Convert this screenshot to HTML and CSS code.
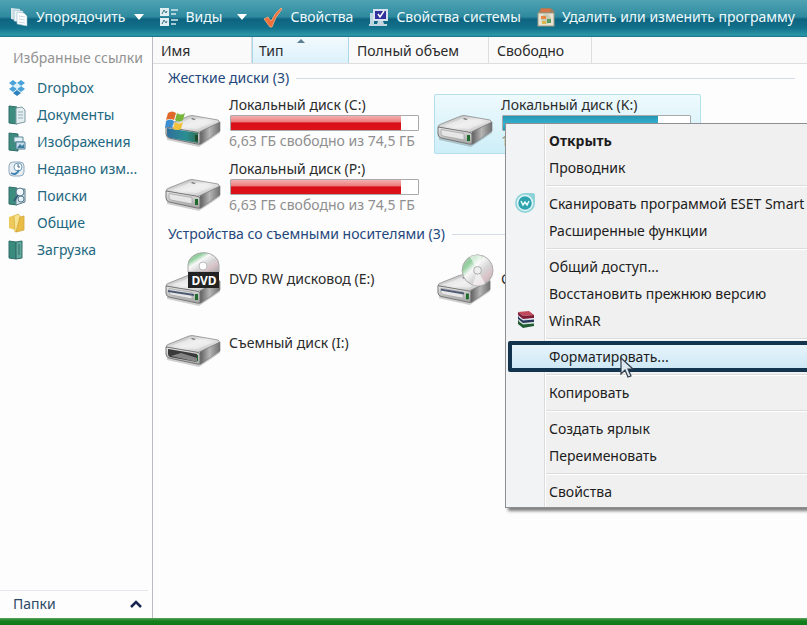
FILE: index.html
```html
<!DOCTYPE html>
<html lang="ru">
<head>
    <meta charset="UTF-8" />
    <meta name="viewport" content="width=device-width, initial-scale=1.0" />
    <title>Компьютер</title>
    <link rel="stylesheet" href="styles.css">
</head>
<body>
    <!-- Shared drive shapes -->
    <svg class="defs" aria-hidden="true">
        <defs>
            <linearGradient id="driveTop" x1="0" y1="0" x2="1" y2="1">
                <stop offset="0" stop-color="#a9a9a9" />
                <stop offset="0.5" stop-color="#ececec" />
                <stop offset="1" stop-color="#b4b4b4" />
            </linearGradient>
            <linearGradient id="driveSide" x1="0" y1="0" x2="1" y2="0">
                <stop offset="0" stop-color="#565656" />
                <stop offset="0.5" stop-color="#b5b5b5" />
                <stop offset="1" stop-color="#707070" />
            </linearGradient>
            <linearGradient id="driveFront" x1="0" y1="0" x2="0" y2="1">
                <stop offset="0" stop-color="#e9e9e9" />
                <stop offset="1" stop-color="#a2a2a2" />
            </linearGradient>
            <linearGradient id="systemFront" x1="0" y1="0" x2="1" y2="0">
                <stop offset="0" stop-color="#2f6f9c" />
                <stop offset="0.6" stop-color="#2a8f93" />
                <stop offset="1" stop-color="#2f6f55" />
            </linearGradient>
            <linearGradient id="disc" x1="0" y1="0" x2="1" y2="1">
                <stop offset="0" stop-color="#c9c9c9" />
                <stop offset="0.25" stop-color="#8fcf9c" />
                <stop offset="0.4" stop-color="#f8f8f8" />
                <stop offset="0.6" stop-color="#d5d5d5" />
                <stop offset="0.75" stop-color="#d9c3c8" />
                <stop offset="1" stop-color="#a5a5a5" />
            </linearGradient>
            <symbol id="drive" viewBox="0 0 56 32">
                <path d="M2 22 L34 28 L55 15 L55 18 L34 32 L2 25z" fill="#000" opacity="0.18" />
                <path d="M1 12 Q1 10 4 9 L24 1 Q27 0 30 1 L53 5 Q55 6 54 8 L34 17 L31 18z" fill="url(#driveTop)" stroke="#8b8b8b" stroke-width="0.8" />
                <path d="M6 11 L27 3 L49 7 L32 14z" fill="#f4f4f4" opacity="0.6" />
                <path d="M35 17 L55 7 L55 16 L36 29 Q34 30 34 28z" fill="url(#driveSide)" stroke="#777" stroke-width="0.6" />
                <path d="M1 12 L31 17 Q35 17 35 20 L35 28 Q35 30 32 29 L4 23 Q1 22 1 19z" fill="url(#driveFront)" stroke="#777" stroke-width="1" />
                <path d="M4 14.500 L27 18.500 L27 25 L6 21 Q4 20 4 18z" fill="#e6e6e6" stroke="#a5a5a5" stroke-width="0.8" />
                <rect x="30" y="20" width="3" height="6" fill="#1f6b2c" />
                <path d="M27 3 L31 4 L29 5 L26 4z" fill="#777" />
            </symbol>
        </defs>
    </svg>

    <div class="window">
        <nav class="toolbar" aria-label="Команды">
            <button type="button" class="tool">
                <svg width="19" height="20" viewBox="0 0 19 20">
                    <path d="M1 1l9 1v12l-9-2z" fill="#d8e6ea" />
                    <path d="M4 3l9 1v12l-9-2z" fill="#eef6f8" stroke="#8fb6c2" stroke-width="0.6" />
                    <path d="M7 5l7 1 3 3v10l-10-2z" fill="#fff" stroke="#8fb6c2" stroke-width="0.6" />
                    <path d="M9 9l6 1M9 12l6 1M9 15l6 1" stroke="#c3d7dd" />
                </svg>
                <span>Упорядочить</span>
                <svg class="arrow" width="10" height="6" viewBox="0 0 10 6"><path d="M0 0h10l-5 6z" fill="#fff" /></svg>
            </button>
            <button type="button" class="tool">
                <svg width="19" height="19" viewBox="0 0 19 19">
                    <g fill="#e2eff2"><rect width="9" height="8" /><rect y="10" width="9" height="8" /></g>
                    <path d="M2 6l2-4 2 3 1-2M2 16l2-4 2 3 1-2" stroke="#34768b" fill="none" />
                    <path d="M11 2h7M11 6h5M11 12h7M11 16h5" stroke="#d5e8ed" stroke-width="1.500" />
                </svg>
                <span>Виды</span>
                <svg class="arrow arrow-far" width="10" height="6" viewBox="0 0 10 6"><path d="M0 0h10l-5 6z" fill="#fff" /></svg>
            </button>
            <button type="button" class="tool">
                <svg width="20" height="21" viewBox="0 0 20 21">
                    <path d="M1 12l4-2 3 4Q12 6 18 1l1 1Q12 10 9 20H7z" fill="#f0703c" stroke="#f9ae82" stroke-width="0.8" />
                </svg>
                <span>Свойства</span>
            </button>
            <button type="button" class="tool">
                <svg width="20" height="19" viewBox="0 0 20 19">
                    <path d="M1 5h4v11h3v2H0v-2h1z" fill="#bdd6e2" />
                    <rect x="4" y="1" width="15" height="12" fill="#d7e2f0" />
                    <rect x="6" y="3" width="11" height="8" fill="#33309c" />
                    <path d="M9 6l2 3 4-6" stroke="#fff" stroke-width="1.500" fill="none" />
                    <path d="M9 13h5l1 3h3v2H6v-2h2z" fill="#c4d5e2" />
                </svg>
                <span>Свойства системы</span>
            </button>
            <button type="button" class="tool">
                <svg width="18" height="20" viewBox="0 0 18 20">
                    <path d="M2 4l2-3h10l3 3v3H2z" fill="#9c8060" />
                    <path d="M4 2h9v3H4z" fill="#d87348" />
                    <rect x="1" y="6" width="16" height="13" fill="#e9e4d2" stroke="#9e9a86" />
                    <circle cx="9" cy="12" r="5" fill="#c9cbb5" />
                    <path d="M4 9h5v3H4z" fill="#e68844" /><path d="M10 12h4v4h-4z" fill="#5a9c5f" /><path d="M5 14h4v3H5z" fill="#ddb650" />
                </svg>
                <span>Удалить или изменить программу</span>
            </button>
        </nav>

        <div class="main">
            <aside class="sidebar">
                <h2>Избранные ссылки</h2>
                <ul class="links">
                    <li><a href="#">
                        <svg width="18" height="18" viewBox="0 0 18 18">
                            <path d="M5 1l4 3-4 3-4-3zM13 1l4 3-4 3-4-3zM5 7l4 3-4 3-4-3zM13 7l4 3-4 3-4-3z" fill="#4aa3d8" />
                            <path d="M9 11l4 3-4 3-4-3z" fill="#2d82bd" />
                            <path d="M9 4l4 3-4 3-4-3z" fill="#dcf0fa" />
                        </svg><span>Dropbox</span></a></li>
                    <li><a href="#">
                        <svg width="18" height="20" viewBox="0 0 18 20">
                            <path d="M1 1l8 1v17l-8-1z" fill="#3c8c80" stroke="#2e6d68" />
                            <path d="M8 3l6-1 3 3v12l-9 2z" fill="#e4eef0" stroke="#7d9ba3" />
                            <path d="M10 7h5M10 10h5M10 13h5" stroke="#8fb0bb" />
                        </svg><span>Документы</span></a></li>
                    <li><a href="#">
                        <svg width="18" height="20" viewBox="0 0 18 20">
                            <path d="M1 1l9 1v17l-9-1z" fill="#3c8c80" stroke="#2e6d68" />
                            <path d="M6 5h9v5H6z" fill="#e2f0f5" stroke="#5f8b9b" />
                            <path d="M8 10h9v7H8z" fill="#c5dceb" stroke="#4d7c93" />
                            <path d="M9 16l3-4 2 2 2-2v4z" fill="#3d7d9d" />
                        </svg><span>Изображения</span></a></li>
                    <li><a href="#">
                        <svg width="18" height="18" viewBox="0 0 18 18">
                            <rect x="1" y="2" width="15" height="14" rx="4" fill="#e6eef4" stroke="#8fa9bb" />
                            <circle cx="10" cy="7" r="4" fill="#fff" stroke="#6f9cba" />
                            <path d="M10 4v3h2" stroke="#31658b" fill="none" />
                            <path d="M3 13q5 3 8-3" stroke="#3d82b3" stroke-width="2" fill="none" />
                        </svg><span>Недавно изм...</span></a></li>
                    <li><a href="#">
                        <svg width="18" height="20" viewBox="0 0 18 20">
                            <path d="M1 1l8 1v17l-8-1z" fill="#3c8c80" stroke="#2e6d68" />
                            <path d="M8 3h9v13l-9 3z" fill="#d4e3e8" stroke="#607f8b" />
                            <circle cx="12" cy="6" r="4" fill="#f1f8fb" stroke="#50798e" />
                            <path d="M10 9l-4 6" stroke="#305d74" stroke-width="2" />
                            <circle cx="13" cy="13" r="3" fill="#e6f1f5" stroke="#50798e" />
                        </svg><span>Поиски</span></a></li>
                    <li><a href="#">
                        <svg width="18" height="20" viewBox="0 0 18 20">
                            <path d="M1 4l6-2v15l-6-2z" fill="#ecc95a" />
                            <path d="M6 3l4-2 2 2v14l-5 2z" fill="#f7e290" stroke="#d9b54a" stroke-width="0.8" />
                            <path d="M12 4l4-1v14l-8 2z" fill="#e9bd45" stroke="#cfa73a" stroke-width="0.8" />
                        </svg><span>Общие</span></a></li>
                    <li><a href="#">
                        <svg width="18" height="20" viewBox="0 0 18 20">
                            <path d="M1 1l7 1v17l-7-1z" fill="#3a8a7e" stroke="#2e6d68" />
                            <path d="M8 2l6-1v17l-6 1z" fill="#62a79b" stroke="#2e6d68" />
                            <path d="M11 4v11" stroke="#2e6d68" />
                        </svg><span>Загрузка</span></a></li>
                </ul>
                <button type="button" class="folders">
                    <span>Папки</span>
                    <svg width="12" height="8" viewBox="0 0 12 8"><path d="M1 7l5-5 5 5" fill="none" stroke="#16264f" stroke-width="2.500" /></svg>
                </button>
            </aside>

            <section class="content">
                <div class="columns">
                    <button type="button" class="col col-name">Имя</button>
                    <button type="button" class="col col-type">Тип
                        <svg class="sort" width="8" height="4" viewBox="0 0 8 4"><path d="M0 4l4-4 4 4z" fill="#5a7f92" /></svg>
                    </button>
                    <button type="button" class="col col-size">Полный объем</button>
                    <button type="button" class="col col-free">Свободно</button>
                </div>

                <h3 class="group">Жесткие диски (3)</h3>
                <div class="tiles">
                    <div class="tile">
                        <svg class="icon" width="56" height="52" viewBox="0 0 56 52">
                            <use href="#drive" x="0" y="18" width="56" height="32" />
                            <path d="M2 31l31 5v10L5 41q-3-1-3-3z" fill="url(#systemFront)" />
                            <rect x="30" y="38" width="3" height="6" fill="#1f4b2c" />
                            <path d="M3 16q4-3 8 0l-2 7q-4-2-8 0z" fill="#e06a2c" />
                            <path d="M12 16q4 3 8 0l-2 7q-4 3-8 0z" fill="#79b63c" />
                            <path d="M1 24q4-3 8 0l-2 7q-3-2-7 0z" fill="#3e8fd0" />
                            <path d="M10 25q4 3 8 0l-2 7q-4 2-8 0z" fill="#f2c13a" />
                        </svg>
                        <div class="info">
                            <span>Локальный диск (C:)</span>
                            <div class="bar bar-red"><i style="width: 91%"></i></div>
                            <span class="free">6,63 ГБ свободно из 74,5 ГБ</span>
                        </div>
                    </div>
                    <div class="tile tile-selected">
                        <svg class="icon" width="56" height="52" viewBox="0 0 56 52"><use href="#drive" x="0" y="18" width="56" height="32" /></svg>
                        <div class="info">
                            <span>Локальный диск (K:)</span>
                            <div class="bar bar-blue"><i style="width: 83%"></i></div>
                            <span class="free">12,6 ГБ</span>
                        </div>
                    </div>
                    <div class="tile">
                        <svg class="icon" width="56" height="52" viewBox="0 0 56 52"><use href="#drive" x="0" y="18" width="56" height="32" /></svg>
                        <div class="info">
                            <span>Локальный диск (P:)</span>
                            <div class="bar bar-red"><i style="width: 91%"></i></div>
                            <span class="free">6,63 ГБ свободно из 74,5 ГБ</span>
                        </div>
                    </div>
                </div>

                <h3 class="group">Устройства со съемными носителями (3)</h3>
                <div class="tiles">
                    <div class="tile">
                        <svg class="icon" width="56" height="52" viewBox="0 0 56 52">
                            <use href="#drive" x="0" y="21" width="56" height="32" />
                            <path d="M3 38l26 4" stroke="#4d5873" stroke-width="2" />
                            <path d="M23 19V12a15 12 0 0 1 31 0v7z" fill="url(#disc)" stroke="#a8a8a8" />
                            <circle cx="38" cy="13" r="4" fill="#fff" stroke="#bbb" />
                            <rect x="23" y="19" width="31" height="16" fill="#222" />
                            <text class="dvd" x="39" y="32" text-anchor="middle">DVD</text>
                        </svg>
                        <div class="info"><span>DVD RW дисковод (E:)</span></div>
                    </div>
                    <div class="tile">
                        <svg class="icon" width="58" height="52" viewBox="0 0 58 52">
                            <use href="#drive" x="0" y="21" width="56" height="32" />
                            <path d="M4 37l24 4" stroke="#4d5873" stroke-width="2" />
                            <circle cx="42" cy="17" r="16" fill="url(#disc)" stroke="#a8a8a8" />
                            <path d="M42 17L34 3a16 16 0 0 1 12-1zM42 17l8 14a16 16 0 0 1-13 1z" fill="#fff" opacity="0.6" />
                            <circle cx="42" cy="17" r="4" fill="#eee" stroke="#aaa" />
                        </svg>
                        <div class="info"><span>CD (F:)</span></div>
                    </div>
                    <div class="tile">
                        <svg class="icon" width="56" height="52" viewBox="0 0 56 52">
                            <use href="#drive" x="0" y="18" width="56" height="32" />
                            <path d="M3 32l29 5v8L5 40q-2-1-2-3z" fill="#3a3a3a" />
                            <path d="M6 39l10-3 16 5v4z" fill="#858585" />
                        </svg>
                        <div class="info"><span>Съемный диск (I:)</span></div>
                    </div>
                </div>
            </section>
        </div>

        <div class="taskbar"></div>

        <div class="menu" role="menu">
            <button type="button" role="menuitem" class="item item-default">Открыть</button>
            <button type="button" role="menuitem" class="item">Проводник</button>
            <hr>
            <button type="button" role="menuitem" class="item">
                <svg class="item-icon" width="20" height="20" viewBox="0 0 20 20">
                    <path d="M10 0h8q2 0 2 2v8a10 10 0 1 1-10-10z" fill="#8fd3d8" />
                    <circle cx="10" cy="10" r="7.500" fill="#2ea3ae" stroke="#e2f6f7" stroke-width="1.500" />
                    <path d="M6 8l2 4 2-3 2 3 2-4" fill="none" stroke="#e9fbfc" stroke-width="1.500" />
                </svg>Сканировать программой ESET Smart S</button>
            <button type="button" role="menuitem" class="item">Расширенные функции</button>
            <hr>
            <button type="button" role="menuitem" class="item">Общий доступ...</button>
            <button type="button" role="menuitem" class="item">Восстановить прежнюю версию</button>
            <button type="button" role="menuitem" class="item">
                <svg class="item-icon" width="20" height="18" viewBox="0 0 20 18">
                    <g transform="translate(2 0)">
                        <path d="M1 2l11-1 5 4-11 1z" fill="#c14a5c" />
                        <path d="M1 2l5 4 11-1v3L6 9 1 5z" fill="#7c1d35" />
                        <path d="M1 6l5 4 11-1v3L6 13 1 9z" fill="#28365c" />
                        <path d="M2 7l4 3 11-1" stroke="#dbe1ec" fill="none" />
                        <path d="M1 10l5 4 11-1v3L6 18l-5-4z" fill="#1f5c33" />
                        <path d="M2 11l4 3 11-1" stroke="#cfe3d2" fill="none" />
                    </g>
                </svg>WinRAR</button>
            <hr>
            <button type="button" role="menuitem" class="item item-active">Форматировать...
                <svg class="cursor" width="14" height="22" viewBox="0 0 14 22"><path d="M1 1v16l4-4 3 7 3-1-3-7h5z" fill="#dce8f0" stroke="#333d4c" stroke-width="1.200" /></svg>
            </button>
            <hr>
            <button type="button" role="menuitem" class="item">Копировать</button>
            <hr>
            <button type="button" role="menuitem" class="item">Создать ярлык</button>
            <button type="button" role="menuitem" class="item">Переименовать</button>
            <hr>
            <button type="button" role="menuitem" class="item">Свойства</button>
        </div>
    </div>
</body>
</html>
```
FILE: styles.css
```css
* {
    margin: 0;
    padding: 0;
    box-sizing: border-box;
}

body {
    font-family: "Noto Sans", "Open Sans", sans-serif;
    font-size: 14px;
    line-height: 20px;
    color: #2b2b2b;
    background: #fdfdfd;
}

button {
    font: inherit;
    color: inherit;
    background: none;
    border: none;
    text-align: left;
    white-space: nowrap;
}

.defs {
    position: absolute;
    width: 0;
    height: 0;
}

.window {
    position: relative;
    display: flex;
    flex-direction: column;
    min-height: 100vh;
    overflow: hidden;
}

/* Toolbar */
.toolbar {
    display: flex;
    gap: 16px;
    height: 37px;
    padding: 0 10px 3px;
    background: linear-gradient(#4fa3b3 0, #2f8a9f 45%, #0d6480 52%, #12718b 75%, #2b97a8 95%, #1b6f85 100%);
}

.tool {
    display: flex;
    align-items: center;
    gap: 7px;
    flex: none;
    color: #eefafc;
}

.arrow {
    margin-left: 1px;
}

.arrow-far {
    margin-left: 8px;
}

.main {
    display: flex;
    flex: 1;
}

/* Favourite links */
.sidebar {
    display: flex;
    flex-direction: column;
    width: 153px;
    flex: none;
    border-right: 1px solid #b9bcc2;
}

.sidebar h2 {
    padding: 11px 0 6px 13px;
    font-size: 14px;
    font-weight: 400;
    color: #929292;
    white-space: nowrap;
}

.links {
    flex: 1;
    list-style: none;
}

.links a {
    display: flex;
    align-items: center;
    gap: 11px;
    height: 27px;
    padding-left: 8px;
    color: #22677f;
    text-decoration: none;
    white-space: nowrap;
}

.links a:hover {
    text-decoration: underline;
}

.folders {
    display: flex;
    justify-content: space-between;
    align-items: center;
    height: 28px;
    margin-right: 4px;
    padding: 0 6px 2px 13px;
    border-top: 1px solid #e4e8ec;
    color: #2c4a66;
}

/* Column headers */
.content {
    flex: 1;
    min-width: 0;
}

.columns {
    display: flex;
    height: 27px;
    background: #fafafa;
    border-bottom: 1px solid #dedede;
}

.col {
    position: relative;
    padding: 2px 8px 0;
    border-right: 1px solid #dcdfe2;
}

.col-name {
    width: 99px;
}

.col-type {
    width: 97px;
    background: linear-gradient(#f2fafe, #dcf1fb);
    border-left: 1px solid #a9d6ea;
    border-right-color: #a9d6ea;
    padding-left: 6px;
}

.col-size {
    width: 140px;
}

.col-free {
    width: 103px;
}

.sort {
    position: absolute;
    top: 2px;
    left: 44px;
}

/* Drive groups */
.group {
    display: flex;
    align-items: center;
    gap: 7px;
    height: 30px;
    padding: 0 12px 2px 15px;
    font-size: 14px;
    font-weight: 400;
    color: #24487c;
    white-space: nowrap;
}

.group::after {
    content: "";
    flex: 1;
    height: 1px;
    background: #d3dde8;
}

.tiles {
    display: grid;
    grid-template-columns: repeat(auto-fill, 267px);
    gap: 4px 5px;
    padding-left: 9px;
    margin-bottom: 2px;
}

.tile {
    display: flex;
    align-items: center;
    gap: 8px;
    height: 60px;
    padding: 0 9px 2px 2px;
    border: 1px solid transparent;
    white-space: nowrap;
}

.tile-selected {
    background: linear-gradient(#eefafd, #cdeef8);
    border-color: #b3dfee;
    border-radius: 2px;
}

.icon {
    flex: none;
    width: 56px;
    overflow: visible;
}

.info {
    flex: 1;
    display: flex;
    flex-direction: column;
}

.bar {
    height: 16px;
    margin-left: 1px;
    border: 1px solid #a9a9a9;
    border-radius: 1px;
    background: #fff;
}

.bar i {
    display: block;
    height: 100%;
}

.bar-red i {
    background: linear-gradient(#f5b0b0 0, #ec7f80 40%, #d90f17 50%, #dc1219 100%);
}

.bar-blue i {
    background: linear-gradient(#2596b6, #35b4d0 60%, #1b9dbe);
}

.free {
    color: #8f8f8f;
}

.dvd {
    font-size: 12px;
    font-weight: 700;
    fill: #fff;
}

.taskbar {
    height: 7px;
    background: linear-gradient(#5aa35e 0, #16801f 40%, #0f7a18 100%);
}

/* Context menu */
.menu {
    position: absolute;
    top: 123px;
    left: 505px;
    right: -20px;
    padding: 3px 2px 2px;
    background: linear-gradient(90deg, #f2f3f4 38px, #dcdcdc 38px, #dcdcdc 39px, #fff 39px, #fff 40px, #f0f0f0 40px);
    border: 1px solid #8d8f92;
    box-shadow: 3px 3px 3px rgba(0, 0, 0, 0.5);
    color: #1d1d1d;
}

.menu hr {
    height: 2px;
    margin: 4px 0 3px 38px;
    border: none;
    border-top: 1px solid #dcdcdc;
    border-bottom: 1px solid #fff;
}

.item {
    position: relative;
    display: block;
    width: 100%;
    height: 27px;
    padding-left: 41px;
}

.item-default {
    font-weight: 700;
}

.item-icon {
    position: absolute;
    top: 3px;
    left: 7px;
}

.item-active {
    height: 31px;
    margin: -2px 0;
    padding-left: 37px;
    background: linear-gradient(#e6f4fb, #cfe8f6);
    border: 4px solid #12344f;
    border-radius: 2px;
}

.cursor {
    position: absolute;
    top: 12px;
    left: 108px;
}
```
